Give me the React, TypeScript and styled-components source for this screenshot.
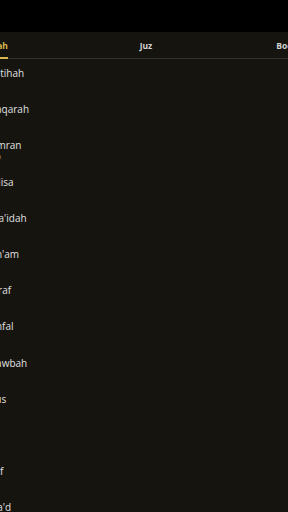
import styled, { createGlobalStyle } from "styled-components";

const GlobalStyle = createGlobalStyle`
  html, body {
    margin: 0;
    padding: 0;
    background: #15140f;
    font-family: "Open Sans", "Noto Sans", sans-serif;
    overflow: hidden;
  }
`;

const StatusBar = styled.div`
  height: 32px;
  background: #000;
`;

const Viewport = styled.div`
  width: 288px;
  height: 480px;
  overflow: hidden;
  background: #15140f;
`;

// the page is scrolled sideways, so the content starts left of the screen
const Track = styled.div`
  width: 460px;
  margin-left: -80px;
`;

const TabBar = styled.div`
  display: grid;
  grid-template-columns: 151px 150px 159px;
  height: 26px;
  border-bottom: 1px solid #34322a;
`;

const Tab = styled.div`
  display: flex;
  justify-content: center;
  align-items: stretch;
`;

const TabLabel = styled.span<{ $active?: boolean }>`
  display: flex;
  align-items: center;
  font-size: 8.5px;
  font-weight: 700;
  color: ${({ $active }) => ($active ? "#d8b94c" : "#d2d2d2")};
  border-bottom: 2px solid ${({ $active }) => ($active ? "#d8b94c" : "transparent")};
  margin-bottom: -1px;
  padding-top: 1px;
`;

const List = styled.div`
  display: flex;
  flex-direction: column;
`;

const Row = styled.div`
  height: 36.2px;
  box-sizing: border-box;
  padding: 7px 0 0 57.5px;
  display: flex;
  flex-direction: column;
`;

const Name = styled.span`
  font-size: 10px;
  line-height: 14px;
  color: #e0e0e0;
  white-space: nowrap;
`;

const Note = styled.span`
  font-size: 6.5px;
  line-height: 9px;
  color: #bdbdbd;
  white-space: nowrap;
`;

const surahs: { name: string; note?: string }[] = [
  { name: "Al-Fatihah" },
  { name: "Al-Baqarah" },
  { name: "Ali 'Imran", note: "Al-'Imra" },
  { name: "An-Nisa" },
  { name: "Al-Ma'idah" },
  { name: "Al-An'am" },
  { name: "Al-A'raf" },
  { name: "Al-Anfal" },
  { name: "At-Tawbah" },
  { name: "Yunus" },
  { name: "Hud" },
  { name: "Yusuf" },
  { name: "Ar-Ra'd" },
];

export default function App() {
  return (
    <>
      <GlobalStyle />
      <StatusBar />
      <Viewport>
        <Track>
          <TabBar>
            <Tab>
              <TabLabel $active>Surah</TabLabel>
            </Tab>
            <Tab>
              <TabLabel>Juz</TabLabel>
            </Tab>
            <Tab>
              <TabLabel>Bookmarks</TabLabel>
            </Tab>
          </TabBar>
          <List>
            {surahs.map((s) => (
              <Row key={s.name}>
                <Name>{s.name}</Name>
                {s.note && <Note>{s.note}</Note>}
              </Row>
            ))}
          </List>
        </Track>
      </Viewport>
    </>
  );
}
